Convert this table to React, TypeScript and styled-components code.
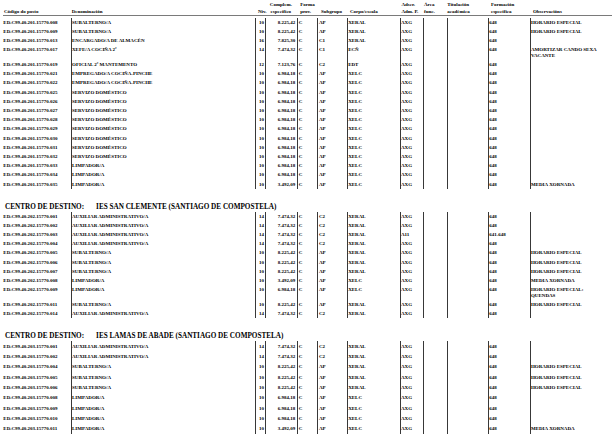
import React from "react";
import styled, { createGlobalStyle } from "styled-components";

const COLS =
  "67.5px 184.5px 10px 31.7px 20.3px 29.7px 53.3px 23px 23.7px 41px 42.3px 1fr";

const Global = createGlobalStyle`
  html, body { margin: 0; padding: 0; background: #ffffff; }
  body { font-family: "Liberation Serif", "Times New Roman", serif; color: #000; }
`;

const Page = styled.div`
  width: 615px;
  height: 439px;
  overflow: hidden;
  box-sizing: border-box;
  padding: 0 3px;
`;

const HeaderRow = styled.div`
  display: grid;
  grid-template-columns: ${COLS};
  align-items: end;
  padding-top: 1px;
  border-bottom: 1px solid #7a7a7a;
  margin-bottom: 2px;
`;

const HeadCell = styled.div<{ $pad?: number; $center?: boolean }>`
  font-size: 5px;
  font-weight: 700;
  line-height: 7px;
  white-space: nowrap;
  padding-left: ${(p) => p.$pad ?? 0}px;
  text-align: ${(p) => (p.$center ? "center" : "left")};
`;

const Table = styled.div`
  display: flex;
  flex-direction: column;
`;

const Row = styled.div`
  display: grid;
  grid-template-columns: ${COLS};
`;

const Cell = styled.div<{ $first?: boolean; $right?: boolean; $pad: number; $vpad: number }>`
  font-size: 5px;
  font-weight: 700;
  line-height: 5.5px;
  padding: ${(p) => p.$vpad}px 0;
  white-space: pre-line;
  overflow: visible;
  border-left: ${(p) => (p.$first ? "none" : "1px solid #383838")};
  text-align: ${(p) => (p.$right ? "right" : "left")};
  padding-left: ${(p) => (p.$right ? 0 : p.$pad)}px;
  padding-right: ${(p) => (p.$right ? p.$pad : 0)}px;
`;

const SectionTitle = styled.div<{ $space: number }>`
  display: flex;
  gap: 12px;
  font-size: 7.2px;
  font-weight: 700;
  line-height: 8px;
  white-space: nowrap;
  padding-left: 2px;
  margin: ${(p) => p.$space}px 0 1px;
`;

type Spec = { pad: number; right?: boolean };
const SPECS: Spec[] = [
  { pad: 0.3 },
  { pad: 0.5 },
  { pad: 3 },
  { pad: 1.5, right: true },
  { pad: 1 },
  { pad: 1 },
  { pad: 0.5 },
  { pad: 0 },
  { pad: 0 },
  { pad: 0 },
  { pad: 0.5 },
  { pad: 0 },
];

type R = string[];

const mk = (
  code: string,
  den: string,
  niv: string,
  comp: string,
  sub: string,
  corpo: string,
  obs = "",
  adscr = "AXG",
  form = "648"
): R => [code, den, niv, comp, "C", sub, corpo, adscr, "", "", form, obs];

const p1 = "ED.C99.40.201.15770.";
const p2 = "ED.C99.40.202.15770.";
const p3 = "ED.C99.40.203.15770.";

const SUB = "SUBALTERNO/A";
const SD = "SERVIZO DOMÉSTICO";
const LIM = "LIMPADOR/A";
const AUX = "AUXILIAR ADMINISTRATIVO/A";
const HE = "HORARIO ESPECIAL";
const MX = "MEDIA XORNADA";

const section1: R[] = [
  mk(p1 + "008", SUB, "10", "8.225,42", "AP", "XERAL", HE),
  mk(p1 + "009", SUB, "10", "8.225,42", "AP", "XERAL", HE),
  mk(p1 + "013", "ENCARGADO/A DE ALMACÉN", "16", "7.825,30", "C1", "XERAL"),
  mk(p1 + "017", "XEFE/A COCIÑA 2ª", "14", "7.474,32", "C1", "ECÑ", "AMORTIZAR CANDO SEXA\nVACANTE"),
  mk(p1 + "019", "OFICIAL 2ª MANTEMENTO", "12", "7.123,76", "C2", "EDT"),
  mk(p1 + "021", "EMPREGADO/A COCIÑA-PINCHE", "10", "6.984,18", "AP", "XELC"),
  mk(p1 + "022", "EMPREGADO/A COCIÑA-PINCHE", "10", "6.984,18", "AP", "XELC"),
  mk(p1 + "025", SD, "10", "6.984,18", "AP", "XELC"),
  mk(p1 + "026", SD, "10", "6.984,18", "AP", "XELC"),
  mk(p1 + "027", SD, "10", "6.984,18", "AP", "XELC"),
  mk(p1 + "028", SD, "10", "6.984,18", "AP", "XELC"),
  mk(p1 + "029", SD, "10", "6.984,18", "AP", "XELC"),
  mk(p1 + "030", SD, "10", "6.984,18", "AP", "XELC"),
  mk(p1 + "031", SD, "10", "6.984,18", "AP", "XELC"),
  mk(p1 + "032", SD, "10", "6.984,18", "AP", "XELC"),
  mk(p1 + "033", LIM, "10", "6.984,18", "AP", "XELC"),
  mk(p1 + "034", LIM, "10", "6.984,18", "AP", "XELC"),
  mk(p1 + "035", LIM, "10", "3.492,09", "AP", "XELC", MX),
];

const section2: R[] = [
  mk(p2 + "001", AUX, "14", "7.474,32", "C2", "XERAL"),
  mk(p2 + "002", AUX, "14", "7.474,32", "C2", "XERAL"),
  mk(p2 + "003", AUX, "14", "7.474,32", "C2", "XERAL", "", "A11", "641-648"),
  mk(p2 + "004", AUX, "14", "7.474,32", "C2", "XERAL"),
  mk(p2 + "005", SUB, "10", "8.225,42", "AP", "XERAL", HE),
  mk(p2 + "006", SUB, "10", "8.225,42", "AP", "XERAL", HE),
  mk(p2 + "007", SUB, "10", "8.225,42", "AP", "XERAL", HE),
  mk(p2 + "008", LIM, "10", "3.492,09", "AP", "XELC", MX),
  mk(p2 + "009", LIM, "10", "6.984,18", "AP", "XELC", "HORARIO ESPECIAL:\nQUENDAS"),
  mk(p2 + "011", SUB, "10", "8.225,42", "AP", "XERAL", HE),
  mk(p2 + "014", AUX, "14", "7.474,32", "C2", "XERAL"),
];

const section3: R[] = [
  mk(p3 + "001", AUX, "14", "7.474,32", "C2", "XERAL"),
  mk(p3 + "002", AUX, "14", "7.474,32", "C2", "XERAL"),
  mk(p3 + "004", SUB, "10", "8.225,42", "AP", "XERAL", HE),
  mk(p3 + "005", SUB, "10", "8.225,42", "AP", "XERAL", HE),
  mk(p3 + "006", SUB, "10", "8.225,42", "AP", "XERAL", HE),
  mk(p3 + "008", LIM, "10", "6.984,18", "AP", "XELC"),
  mk(p3 + "009", LIM, "10", "6.984,18", "AP", "XELC"),
  mk(p3 + "010", LIM, "10", "6.984,18", "AP", "XELC"),
  mk(p3 + "011", LIM, "10", "3.492,09", "AP", "XELC", MX),
];

const Rows: React.FC<{ rows: R[]; vpad?: number }> = ({ rows, vpad = 1.85 }) => (
  <Table>
    {rows.map((r) => (
      <Row key={r[0]}>
        {r.map((v, i) => (
          <Cell
            key={i}
            $first={i === 0}
            $right={SPECS[i].right}
            $pad={SPECS[i].pad}
            $vpad={vpad}
          >
            {v}
          </Cell>
        ))}
      </Row>
    ))}
  </Table>
);

const Header: React.FC = () => (
  <HeaderRow>
    <HeadCell $pad={1}>Código do posto</HeadCell>
    <HeadCell $pad={1.2}>Denominación</HeadCell>
    <HeadCell $pad={3}>Niv.</HeadCell>
    <HeadCell $center>
      Complem.
      <br />
      especifico
    </HeadCell>
    <HeadCell $pad={3.5}>
      Forma
      <br />
      prov.
    </HeadCell>
    <HeadCell $pad={4}>Subgrupo</HeadCell>
    <HeadCell $pad={3.3}>Corpo/escala</HeadCell>
    <HeadCell $pad={1.5}>
      Adscr.
      <br />
      Adm. P.
    </HeadCell>
    <HeadCell $pad={1}>
      Área
      <br />
      func.
    </HeadCell>
    <HeadCell $pad={0.5}>
      Titulación
      <br />
      académica
    </HeadCell>
    <HeadCell $pad={3.3}>
      Formación
      <br />
      específica
    </HeadCell>
    <HeadCell $pad={3}>Observacións</HeadCell>
  </HeaderRow>
);

const Title: React.FC<{ space: number; name: string }> = ({ space, name }) => (
  <SectionTitle $space={space}>
    <span>CENTRO DE DESTINO:</span>
    <span>{name}</span>
  </SectionTitle>
);

export default function App() {
  return (
    <Page>
      <Global />
      <Header />
      <Rows rows={section1} />
      <Title space={14} name="IES SAN CLEMENTE (SANTIAGO DE COMPOSTELA)" />
      <Rows rows={section2} />
      <Title space={14} name="IES LAMAS DE ABADE (SANTIAGO DE COMPOSTELA)" />
      <Rows rows={section3} vpad={2.4} />
    </Page>
  );
}
